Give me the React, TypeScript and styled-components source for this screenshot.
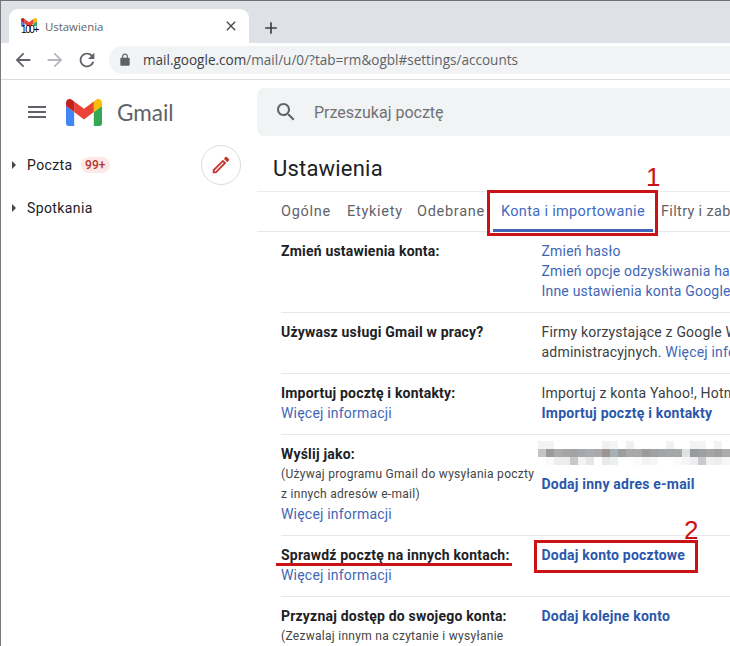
import React from "react";
import styled, { createGlobalStyle } from "styled-components";

const Global = createGlobalStyle`
  html, body { margin: 0; padding: 0; background: #fff; }
  #root { width: 730px; height: 646px; overflow: hidden; }
`;

const Page = styled.div`
  position: relative;
  width: 730px;
  height: 646px;
  box-sizing: border-box;
  overflow: hidden;
  background: #fff;
  border-top: 1px solid #6d7074;
  border-left: 1px solid #77797c;
  font-family: Roboto, "Liberation Sans", sans-serif;
  color: #202124;
`;

const TabStrip = styled.div`
  height: 42px;
  background: #dee1e6;
  display: flex;
  align-items: flex-end;
  padding-left: 8px;
`;

const Tab = styled.div`
  width: 240px;
  height: 34px;
  box-sizing: border-box;
  background: #fff;
  border-radius: 9px 9px 0 0;
  display: flex;
  align-items: center;
  padding: 0 10px 0 12px;
`;

const TabIcon = styled.span`
  position: relative;
  width: 16px;
  height: 18px;
  padding-top: 1px;
  box-sizing: border-box;
  flex: none;
  display: block;
`;

const TabCount = styled.span`
  position: absolute;
  left: 0;
  top: 9px;
  font: 10px/8px "Liberation Sans", sans-serif;
  letter-spacing: -1.4px;
  color: #000;
  background: #fff;
  white-space: nowrap;
`;

const TabTitle = styled.span`
  margin-left: 8px;
  flex: 1;
  font: 11.4px "Open Sans", sans-serif;
  color: #5f6368;
`;

const NewTab = styled.span`
  width: 16px;
  height: 16px;
  margin: 0 0 0 12px;
  align-self: center;
  display: flex;
  position: relative;
  top: 4px;
`;

const Toolbar = styled.div`
  height: 37px;
  box-sizing: border-box;
  display: flex;
  align-items: center;
  gap: 10px;
  padding: 0 0 2px 11px;
  border-bottom: 1px solid #dadce0;
  background: #fff;
`;

const NavIcon = styled.svg`
  flex: none;
`;

const Omnibox = styled.div`
  flex: 1;
  height: 28px;
  margin-left: 1px;
  border-radius: 14px 0 0 14px;
  background: #f1f3f4;
  display: flex;
  align-items: center;
  padding-left: 9px;
  gap: 11px;
  font: 13.55px "Open Sans", sans-serif;
  color: #5f6368;
  white-space: nowrap;
`;

const Url = styled.span`
  b {
    font-weight: 400;
    color: #3c4043;
  }
`;

const Body = styled.div`
  display: flex;
  height: 566px;
`;

const Sidebar = styled.aside`
  width: 256px;
  flex: none;
`;

const Brand = styled.div`
  height: 65px;
  display: flex;
  align-items: center;
  padding: 0 0 1px 24px;
  box-sizing: border-box;
`;

const BrandGap = styled.span`
  width: 17px;
  flex: none;
`;

const BrandName = styled.span`
  margin-left: 15px;
  font: 400 22.5px Lato, Roboto, sans-serif;
  color: #5f6368;
`;

const NavItem = styled.div<{ $h: number }>`
  height: ${(p) => p.$h}px;
  display: flex;
  align-items: center;
  padding-left: 11px;
  font-size: 14px;
  letter-spacing: 0.4px;
  color: #202124;
`;

const Caret = styled.span`
  width: 0;
  height: 0;
  border-left: 4px solid #444746;
  border-top: 4px solid transparent;
  border-bottom: 4px solid transparent;
  margin-right: 11px;
`;

const Badge = styled.span`
  margin-left: 8px;
  height: 16px;
  padding: 0 4.5px;
  border-radius: 8px;
  background: #fce8e6;
  color: #b3352c;
  font-size: 12px;
  font-weight: 500;
  line-height: 16px;
  letter-spacing: 0;
`;

const Compose = styled.span`
  margin-left: auto;
  margin-right: 16px;
  width: 40px;
  height: 40px;
  box-sizing: border-box;
  border-radius: 50%;
  border: 1px solid #dadce0;
  display: flex;
  align-items: center;
  justify-content: center;
`;

const Main = styled.main`
  flex: 1;
  min-width: 0;
`;

const SearchBar = styled.div`
  margin-top: 8px;
  height: 48px;
  border-radius: 8px 0 0 8px;
  background: #f1f3f4;
  display: flex;
  align-items: center;
  padding-left: 17px;
  gap: 16px;
  font-size: 16px;
  color: #6f7276;
`;

const Title = styled.h1`
  margin: 0;
  height: 56px;
  box-sizing: border-box;
  padding: 19px 0 0 16px;
  font: 400 22px/28px Roboto, sans-serif;
  letter-spacing: 0.2px;
  color: #202124;
  border-bottom: 1px solid #e8eaed;
`;

const Tabs = styled.nav`
  height: 40px;
  box-sizing: border-box;
  display: flex;
  align-items: flex-start;
  padding: 12px 0 0 24px;
  border-bottom: 1px solid #e6e8eb;
  font-size: 14.5px;
  line-height: 16px;
  letter-spacing: 0.33px;
  color: #5f6368;
  white-space: nowrap;
`;

const TabLink = styled.span<{ $w: number; $active?: boolean; $wide?: boolean }>`
  position: relative;
  flex: none;
  width: ${(p) => p.$w}px;
  color: ${(p) => (p.$active ? "#3f6bc4" : "#5f6368")};
  ${(p) => p.$wide && "letter-spacing: 0.72px;"}
  ${(p) =>
    p.$active &&
    `&::after{content:"";position:absolute;left:-8px;right:8px;top:25px;height:3px;background:#3f64b8;}`}
`;

const Rows = styled.div`
  padding-left: 24px;
  font-size: 14px;
  line-height: 20px;
  letter-spacing: 0.2px;
`;

const Row = styled.div<{ $h: number; $noLine?: boolean }>`
  height: ${(p) => p.$h}px;
  box-sizing: border-box;
  display: grid;
  grid-template-columns: 260.5px 1fr;
  padding-top: 9px;
  border-bottom: ${(p) => (p.$noLine ? "none" : "1px solid #e6e8eb")};
  white-space: nowrap;
  overflow: hidden;
`;

const Label = styled.div`
  font-weight: 700;
  color: #202124;
  letter-spacing: 0.2px;
`;

const Sub = styled.div`
  font-size: 12px;
  color: #444;
  letter-spacing: 0.29px;
`;

const Line = styled.div`
  color: #3c4043;
`;

const A = styled.a<{ $bold?: boolean }>`
  display: ${(p) => (p.$bold ? "block" : "inline")};
  color: ${(p) => (p.$bold ? "#2b57ab" : "#3f67b5")};
  font-weight: ${(p) => (p.$bold ? 700 : 400)};
  letter-spacing: ${(p) => (p.$bold ? "0.22px" : "0.2px")};
`;

const Block = styled.div`
  display: block;
`;

const Mosaic = styled.svg`
  display: block;
  width: 192px;
  height: 24px;
  margin: -3px 0 0 -4px;
`;

const SpacedLink = styled.div`
  margin-top: 9px;
`;

const RedBox = styled.div<{ $x: number; $y: number; $w: number; $h: number }>`
  position: absolute;
  left: ${(p) => p.$x}px;
  top: ${(p) => p.$y}px;
  width: ${(p) => p.$w}px;
  height: ${(p) => p.$h}px;
  box-sizing: border-box;
  border: 3px solid #cb1214;
`;

const RedRule = styled.div`
  position: absolute;
  left: 275px;
  top: 562px;
  width: 236px;
  height: 3px;
  background: #cb1214;
`;

const Num = styled.span<{ $x: number; $y: number }>`
  position: absolute;
  left: ${(p) => p.$x}px;
  top: ${(p) => p.$y}px;
  font: 400 26px/26px "Liberation Sans", sans-serif;
  color: #cb1214;
`;

const MSvg = styled.svg`
  flex: none;
  display: block;
`;

const M = ({ w, h }: { w: number; h: number }) => (
  <MSvg width={w} height={h} viewBox="52 42 88 66">
    <path fill="#4285f4" d="M58 108h14V74L52 59v43c0 3.32 2.69 6 6 6" />
    <path fill="#34a853" d="M120 108h14c3.32 0 6-2.69 6-6V59l-20 15" />
    <path fill="#fbbc04" d="M120 48v26l20-15v-8c0-7.42-8.47-11.65-14.4-7.2" />
    <path fill="#ea4335" d="M72 74V48l24 18 24-18v26L96 92" />
    <path fill="#c5221f" d="M52 51v8l20 15V48l-5.6-4.2c-5.94-4.45-14.4-.22-14.4 7.2" />
  </MSvg>
);

const Glyph = ({ d, color, size = 20 }: { d: string; color: string; size?: number }) => (
  <NavIcon viewBox="0 0 24 24" width={size} height={size}>
    <path d={d} fill={color} />
  </NavIcon>
);

const mosaicTop = ["#f3f3f3","#f3f3f3","#fff","#fff","#fff","#fff","#fff","#fff","#f2f0f0","#f4f4f4","#fff","#f0f0f0","#fff","#fff","#fff","#fff","#f2f2f2","#fff","#fff","#f3f3f3","#f4f4f4","#fff","#f3f3f3","#fff"];
const mosaicMid = ["#c4c4c4","#9a9a9a","#ababab","#a5a5a5","#a3a3a5","#a3a9ae","#a8adb1","#a9a9a9","#9c9592","#a7b1b5","#999ea0","#a9a9a9","#a9a9a9","#9b9b9b","#a1a1a1","#a0a5a8","#a5a8a8","#a8a8a8","#dde2e2","#999a9c","#9ea0a4","#a5a5a5","#a0a0a0","#ababab"];
const mosaicBot = ["#fff","#fafafa","#ededed","#ededed","#c8c8c8","#f2f2f2","#e6e6e6","#fff","#e9e9e9","#eef0f0","#fff","#fff","#fafafa","#f3f3f3","#f6f6f6","#fff","#fff","#fafafa","#f5f5f5","#eeeeee","#c9cbce","#f0f0f0","#eeeeee","#f7f7f7"];

const P = {
  back: "M20 11H7.83l5.59-5.59L12 4l-8 8 8 8 1.41-1.41L7.83 13H20v-2z",
  fwd: "M12 4l-1.41 1.41L16.17 11H4v2h12.17l-5.58 5.59L12 20l8-8z",
  reload:
    "M17.65 6.35C16.2 4.9 14.21 4 12 4c-4.42 0-7.99 3.58-7.99 8s3.57 8 7.99 8c3.73 0 6.84-2.55 7.73-6h-2.08c-.82 2.33-3.04 4-5.65 4-3.31 0-6-2.69-6-6s2.69-6 6-6c1.66 0 3.14.69 4.22 1.78L13 11h7V4l-2.35 2.35z",
  lock: "M18 8h-1V6c0-2.76-2.24-5-5-5S7 3.24 7 6v2H6c-1.1 0-2 .9-2 2v10c0 1.1.9 2 2 2h12c1.1 0 2-.9 2-2V10c0-1.1-.9-2-2-2zM9 6c0-1.66 1.34-3 3-3s3 1.34 3 3v2H9V6z",
  search:
    "M15.5 14h-.79l-.28-.27C15.41 12.59 16 11.11 16 9.5 16 5.91 13.09 3 9.5 3S3 5.91 3 9.5 5.91 16 9.5 16c1.61 0 3.09-.59 4.23-1.57l.27.28v.79l5 4.99L20.49 19l-4.99-5zm-6 0C7.01 14 5 11.99 5 9.5S7.01 5 9.5 5 14 7.01 14 9.5 11.99 14 9.5 14z",
  menu: "M3 18h18v-2H3v2zm0-5h18v-2H3v2zm0-7v2h18V6H3z",
  pencil:
    "M3 17.25V21h3.75L17.81 9.94l-3.75-3.75L3 17.25zM5.92 19H5v-.92l9.06-9.06.92.92L5.92 19zM20.71 5.63l-2.34-2.34c-.2-.2-.45-.29-.71-.29s-.51.1-.7.29l-1.83 1.83 3.75 3.75 1.83-1.83c.39-.39.39-1.02 0-1.41z",
  close: "M19 6.41L17.59 5 12 10.59 6.41 5 5 6.41 10.59 12 5 17.59 6.41 19 12 13.41 17.59 19 19 17.59 13.41 12z",
  plus: "M19 13h-6v6h-2v-6H5v-2h6V5h2v6h6v2z",
};

export default function App() {
  return (
    <Page>
      <Global />
      <TabStrip>
        <Tab>
          <TabIcon>
            <M w={16} h={12} />
            <TabCount>100+</TabCount>
          </TabIcon>
          <TabTitle>Ustawienia</TabTitle>
          <Glyph d={P.close} color="#45474a" size={16} />
        </Tab>
        <NewTab>
          <Glyph d={P.plus} color="#3c4043" size={20} />
        </NewTab>
      </TabStrip>
      <Toolbar>
        <Glyph d={P.back} color="#5f6368" size={22} />
        <Glyph d={P.fwd} color="#b5b8bc" size={22} />
        <Glyph d={P.reload} color="#5f6368" size={22} />
        <Omnibox>
          <Glyph d={P.lock} color="#5f6368" size={14} />
          <Url>
            <b>mail.google.com</b>/mail/u/0/?tab=rm&ogbl#settings/accounts
          </Url>
        </Omnibox>
      </Toolbar>
      <Body>
        <Sidebar>
          <Brand>
            <Glyph d={P.menu} color="#5f6368" size={24} />
            <BrandGap />
            <M w={36} h={27} />
            <BrandName>Gmail</BrandName>
          </Brand>
          <NavItem $h={40}>
            <Caret />
            Poczta
            <Badge>99+</Badge>
            <Compose>
              <Glyph d={P.pencil} color="#c5352b" size={22} />
            </Compose>
          </NavItem>
          <NavItem $h={46}>
            <Caret />
            Spotkania
          </NavItem>
        </Sidebar>
        <Main>
          <SearchBar>
            <Glyph d={P.search} color="#5f6368" size={24} />
            Przeszukaj pocztę
          </SearchBar>
          <Title>Ustawienia</Title>
          <Tabs>
            <TabLink $w={66} $wide>Ogólne</TabLink>
            <TabLink $w={70} $wide>Etykiety</TabLink>
            <TabLink $w={84} $wide>Odebrane</TabLink>
            <TabLink $w={160} $active>
              Konta i importowanie
            </TabLink>
            <TabLink $w={80}>Filtry i zablokowane adresy</TabLink>
          </Tabs>
          <Rows>
            <Row $h={81}>
              <Label>Zmień ustawienia konta:</Label>
              <div>
                <Block><A>Zmień hasło</A></Block>
                <Block><A>Zmień opcje odzyskiwania hasła</A></Block>
                <Block><A>Inne ustawienia konta Google</A></Block>
              </div>
            </Row>
            <Row $h={61}>
              <Label>Używasz usługi Gmail w pracy?</Label>
              <div>
                <Line>Firmy korzystające z Google Workspace</Line>
                <Line>
                  administracyjnych. <A>Więcej informacji</A>
                </Line>
              </div>
            </Row>
            <Row $h={61}>
              <div>
                <Label>Importuj pocztę i kontakty:</Label>
                <A>Więcej informacji</A>
              </div>
              <div>
                <Line>Importuj z konta Yahoo!, Hotmail</Line>
                <A $bold>Importuj pocztę i kontakty</A>
              </div>
            </Row>
            <Row $h={101}>
              <div>
                <Label>Wyślij jako:</Label>
                <Sub>(Używaj programu Gmail do wysyłania poczty</Sub>
                <Sub>z innych adresów e-mail)</Sub>
                <A>Więcej informacji</A>
              </div>
              <div>
                <Mosaic viewBox="0 0 192 24" preserveAspectRatio="none" shapeRendering="crispEdges">
                  {[mosaicTop, mosaicMid, mosaicBot].map((row, r) =>
                    row.map((c, i) => <rect key={`${r}-${i}`} x={i * 8} y={r * 8} width={8} height={8} fill={c} />)
                  )}
                </Mosaic>
                <SpacedLink>
                  <A $bold>Dodaj inny adres e-mail</A>
                </SpacedLink>
              </div>
            </Row>
            <Row $h={61}>
              <div>
                <Label>Sprawdź pocztę na innych kontach:</Label>
                <A>Więcej informacji</A>
              </div>
              <A $bold>Dodaj konto pocztowe</A>
            </Row>
            <Row $h={50} $noLine>
              <div>
                <Label>Przyznaj dostęp do swojego konta:</Label>
                <Sub>(Zezwalaj innym na czytanie i wysyłanie</Sub>
              </div>
              <A $bold>Dodaj kolejne konto</A>
            </Row>
          </Rows>
        </Main>
      </Body>
      <RedBox $x={486} $y={189} $w={171} $h={46} />
      <RedBox $x={533} $y={539} $w={164} $h={33} />
      <RedRule />
      <Num $x={645} $y={163}>1</Num>
      <Num $x={683} $y={516}>2</Num>
    </Page>
  );
}
